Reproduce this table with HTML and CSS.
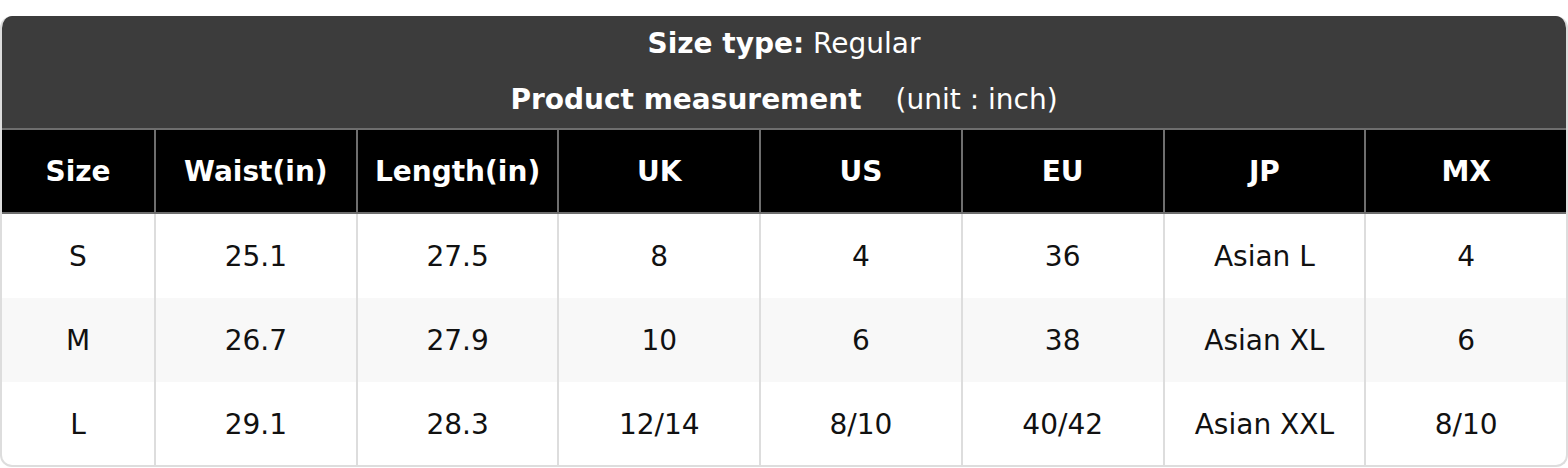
FILE: index.html
```html
<!DOCTYPE html>
<html>
<head>
<meta charset="utf-8">
<link rel="stylesheet" href="styles.css">
</head>
<body>
<div class="card">
  <div class="head">
    <div class="line"><b>Size type:</b> Regular</div>
    <div class="line"><b>Product measurement</b><span class="unit">(unit : inch)</span></div>
  </div>
  <table class="sizes">
    <colgroup>
      <col class="c-first">
      <col><col><col><col><col><col><col>
    </colgroup>
    <thead>
      <tr><th>Size</th><th>Waist(in)</th><th>Length(in)</th><th>UK</th><th>US</th><th>EU</th><th>JP</th><th>MX</th></tr>
    </thead>
    <tbody>
      <tr><td>S</td><td>25.1</td><td>27.5</td><td>8</td><td>4</td><td>36</td><td>Asian L</td><td>4</td></tr>
      <tr class="alt"><td>M</td><td>26.7</td><td>27.9</td><td>10</td><td>6</td><td>38</td><td>Asian XL</td><td>6</td></tr>
      <tr><td>L</td><td>29.1</td><td>28.3</td><td>12/14</td><td>8/10</td><td>40/42</td><td>Asian XXL</td><td>8/10</td></tr>
    </tbody>
  </table>
</div>
</body>
</html>
```

FILE: styles.css
```css
html, body {
  margin: 0;
  padding: 0;
  background: #ffffff;
}
body {
  font-family: "DejaVu Sans", sans-serif;
  padding-top: 16px;
}
.card {
  width: 1568px;
  box-sizing: border-box;
  border-radius: 12px;
  overflow: hidden;
  border: 2px solid #dddddd;
  border-top: none;
  height: 451px;
}
.head {
  background: #3c3c3c;
  color: #ffffff;
  text-align: center;
  font-size: 28px;
  margin: 0 -2px;
}
.line {
  line-height: 56px;
  height: 56px;
}
.unit {
  margin-left: 34px;
}
.sizes {
  width: 1568px;
  margin-left: -2px;
  border-collapse: collapse;
  table-layout: fixed;
  font-size: 28px;
}
.c-first {
  width: 154px;
}
.sizes th {
  background: #000000;
  color: #ffffff;
  font-weight: bold;
  height: 82px;
  padding: 0;
  border: 2px solid #6e6e6e;
  text-align: center;
}
.sizes td {
  height: 84px;
  padding: 0;
  text-align: center;
  color: #111111;
  border-left: 2px solid #dddddd;
  border-right: 2px solid #dddddd;
}
.sizes tr.alt td {
  background: #f8f8f8;
}
```
